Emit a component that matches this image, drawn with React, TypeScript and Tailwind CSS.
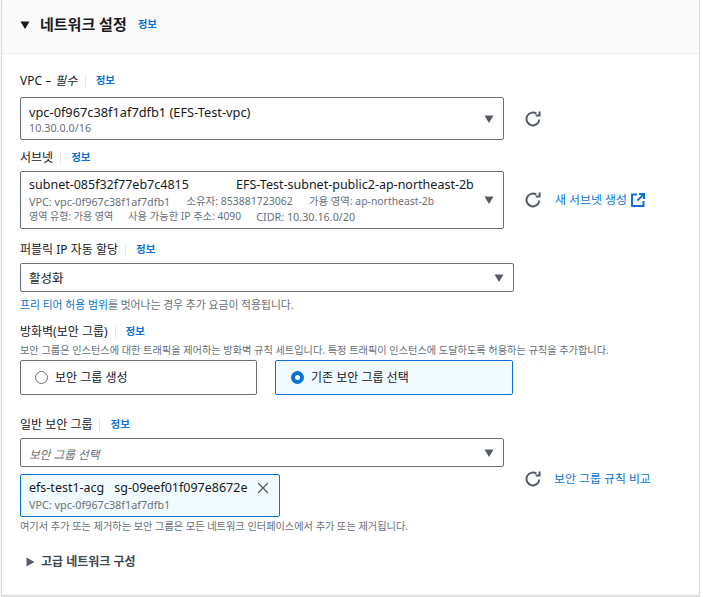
import { X } from "lucide-react";

const font = "font-['Noto_Sans','Noto_Sans_CJK_KR',sans-serif]";

const Caret = ({ dir = "down", className = "" }: { dir?: "down" | "right"; className?: string }) => (
  <svg width="10" height="10" viewBox="0 0 10 10" className={className} fill="currentColor">
    {dir === "down" ? <path d="M0.5 1.5h9L5 9z" /> : <path d="M1.5 0.5v9L9.5 5z" />}
  </svg>
);

const Label = ({ text, em }: { text: string; em?: string }) => (
  <div className="flex items-center h-[15px] text-[12px] text-[#16191f]">
    <span>
      {text}
      {em && <i className="tracking-[0.3px]"> – {em}</i>}
    </span>
    <span className="ml-[7px] mr-[10px] w-px h-[14px] bg-[#e5e7eb]" />
    <a className="text-[10.5px] font-semibold text-[#0972d3]">정보</a>
  </div>
);

const Refresh = () => (
  <svg width="16" height="16" viewBox="0 0 16 16" fill="none" stroke="#545b64" strokeWidth="2" className="shrink-0">
    <path d="M14.3 8.5A6.4 6.4 0 1 1 11.4 2.6" />
    <path d="M14.6 0.6v3.9h-3.9" />
  </svg>
);

const ExternalIcon = () => (
  <svg width="14" height="14" viewBox="0 0 14 14" fill="none" stroke="#0972d3" strokeWidth="2" className="ml-[4px]">
    <path d="M6 1.5H1v11.500h11.500V8" />
    <path d="M8 1h5v5" />
    <path d="M13 1L6.500 7.500" />
  </svg>
);

const SelectBox = ({ className, children }: { className: string; children: React.ReactNode }) => (
  <div className={`flex items-center justify-between pl-[8px] pr-[9px] border border-[#687078] rounded-[2px] bg-white ${className}`}>
    <div className="min-w-0">{children}</div>
    <Caret className="text-[#545b64] shrink-0" />
  </div>
);

export default function App() {
  return (
    <div className={`${font} w-[703px] h-[597px] bg-white`}>
      <div className="ml-px mr-[3px] h-[596px] border-x border-b border-[#d5dbdb] shadow-[0_1px_1px_rgba(0,0,0,0.1)]">
        <div className="flex items-center h-[54px] pl-[18px] pb-[4px] bg-[#fafafa] border-b border-[#eaeded]">
          <Caret className="text-[#16191f]" />
          <h2 className="ml-[10px] text-[15px] font-bold text-[#16191f]">네트워크 설정</h2>
          <a className="ml-[11px] text-[10.5px] font-semibold text-[#0972d3]">정보</a>
        </div>

        <div className="pl-[18px]">
          <div className="pt-[19px]">
            <Label text="VPC" em="필수" />
          </div>
          <div className="mt-[9px] flex items-center">
            <SelectBox className="w-[484px] h-[43px]">
              <div className="text-[12.8px] leading-[18px] text-[#16191f]">vpc-0f967c38f1af7dfb1 (EFS-Test-vpc)</div>
              <div className="text-[10.8px] leading-[14px] text-[#687078]">10.30.0.0/16</div>
            </SelectBox>
            <div className="ml-[21px]">
              <Refresh />
            </div>
          </div>

          <div className="mt-[10px]">
            <Label text="서브넷" />
          </div>
          <div className="mt-[6px] flex items-center">
            <SelectBox className="w-[484px] h-[58px]">
              <div className="flex text-[12.5px] leading-[18px] text-[#16191f]">
                <span className="w-[207px]">subnet-085f32f77eb7c4815</span>
                <span>EFS-Test-subnet-public2-ap-northeast-2b</span>
              </div>
              <div className="flex gap-[16px] text-[10.8px] leading-[15px] text-[#687078]">
                <span>VPC: vpc-0f967c38f1af7dfb1</span>
                <span className="text-[10.5px]">소유자: 853881723062</span>
                <span className="text-[10.4px]">가용 영역: ap-northeast-2b</span>
              </div>
              <div className="flex gap-[15px] text-[10.3px] leading-[15px] text-[#687078]">
                <span className="text-[10px]">영역 유형: 가용 영역</span>
                <span>사용 가능한 IP 주소: 4090</span>
                <span className="text-[10.8px]">CIDR: 10.30.16.0/20</span>
              </div>
            </SelectBox>
            <div className="ml-[21px]">
              <Refresh />
            </div>
            <a className="ml-[14px] text-[11.9px] text-[#0972d3]">새 서브넷 생성</a>
            <ExternalIcon />
          </div>

          <div className="mt-[13px]">
            <Label text="퍼블릭 IP 자동 할당" />
          </div>
          <div className="mt-[6px]">
            <SelectBox className="w-[494px] h-[29px]">
              <span className="relative -top-px text-[12.5px] text-[#16191f]">활성화</span>
            </SelectBox>
          </div>
          <p className="mt-[5px] text-[10.8px] leading-[16px] text-[#687078]">
            <a className="text-[#0972d3]">프리 티어 허용 범위</a>를 벗어나는 경우 추가 요금이 적용됩니다.
          </p>

          <div className="mt-[11px]">
            <Label text="방화벽(보안 그룹)" />
          </div>
          <p className="mt-[4px] text-[10.2px] leading-[15px] text-[#687078]">
            보안 그룹은 인스턴스에 대한 트래픽을 제어하는 방화벽 규칙 세트입니다. 특정 트래픽이 인스턴스에 도달하도록 허용하는 규칙을 추가합니다.
          </p>
          <div className="mt-[2px] flex gap-[18px]">
            <div className="flex items-center w-[237px] h-[35px] pl-[14px] border border-[#687078] rounded-[2px]">
              <span className="w-[13px] h-[13px] rounded-full border border-[#687078]" />
              <span className="ml-[7px] pt-[1px] text-[12px] text-[#16191f]">보안 그룹 생성</span>
            </div>
            <div className="flex items-center w-[238px] h-[35px] pl-[15px] border border-[#0972d3] rounded-[2px] bg-[#f1faff]">
              <span className="w-[13px] h-[13px] rounded-full border-[4px] border-[#0972d3] bg-white" />
              <span className="ml-[7px] pt-[1px] text-[12px] text-[#16191f]">기존 보안 그룹 선택</span>
            </div>
          </div>

          <div className="mt-[22px]">
            <Label text="일반 보안 그룹" />
          </div>
          <div className="mt-[6px]">
            <SelectBox className="w-[484px] h-[29px]">
              <i className="text-[11.7px] text-[#687078]">보안 그룹 선택</i>
            </SelectBox>
          </div>
          <div className="mt-[7px] flex items-start">
            <div className="flex items-start justify-between w-[260px] h-[43px] pl-[8px] pr-[7px] pt-[4px] border border-[#0972d3] rounded-[2px] bg-[#f1faff]">
              <div>
                <div className="flex gap-[10px] text-[12.5px] leading-[18px] text-[#16191f]">
                  <span>efs-test1-acg</span>
                  <span>sg-09eef01f097e8672e</span>
                </div>
                <div className="text-[10.8px] leading-[15px] text-[#687078]">VPC: vpc-0f967c38f1af7dfb1</div>
              </div>
              <X size={18} strokeWidth={1.7} className="shrink-0 text-[#545b64]" />
            </div>
            <div className="ml-[245px] -mt-[4px] flex items-center">
              <Refresh />
              <a className="ml-[13px] text-[11.9px] text-[#0972d3]">보안 그룹 규칙 비교</a>
            </div>
          </div>
          <p className="mt-[2px] text-[10.2px] leading-[15px] text-[#687078]">
            여기서 추가 또는 제거하는 보안 그룹은 모든 네트워크 인터페이스에서 추가 또는 제거됩니다.
          </p>

          <div className="mt-[19px] flex items-center pl-[5px]">
            <Caret dir="right" className="text-[#545b64]" />
            <span className="ml-[6px] text-[12px] font-bold text-[#414750]">고급 네트워크 구성</span>
          </div>
        </div>
      </div>
    </div>
  );
}
